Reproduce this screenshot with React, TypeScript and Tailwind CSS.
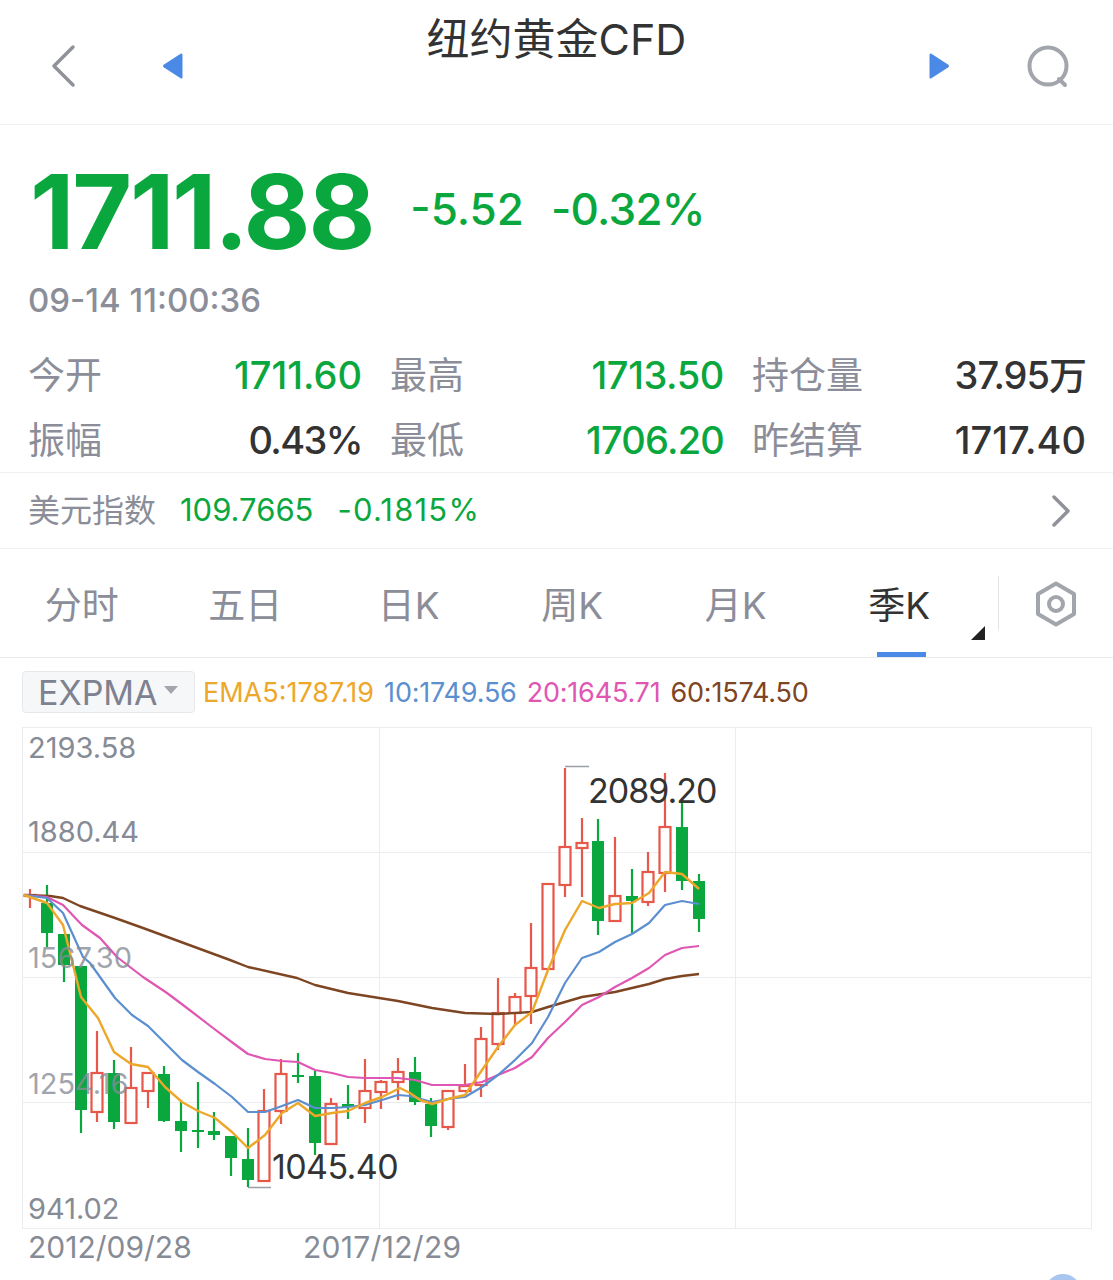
import React from 'react';

const NUM = "font-['Inter','Noto_Sans_CJK_SC',sans-serif]";
const RED = '#e6584a';
const GREEN = '#0aa73e';

// x, wick top, wick bottom, body top, body bottom
const candles: { x: number; hi: number; lo: number; top: number; bot: number; up: boolean }[] = [
  { x: 30, hi: 889, lo: 908, top: 895, bot: 896, up: true },
  { x: 47, hi: 885, lo: 947, top: 903, bot: 933, up: false },
  { x: 64, hi: 934, lo: 982, top: 934, bot: 965, up: false },
  { x: 81, hi: 966, lo: 1133, top: 966, bot: 1110, up: false },
  { x: 97, hi: 1031, lo: 1122, top: 1073, bot: 1112, up: true },
  { x: 114, hi: 1060, lo: 1129, top: 1073, bot: 1122, up: false },
  { x: 131, hi: 1047, lo: 1123, top: 1088, bot: 1123, up: true },
  { x: 148, hi: 1073, lo: 1108, top: 1073, bot: 1091, up: true },
  { x: 164, hi: 1066, lo: 1122, top: 1074, bot: 1121, up: false },
  { x: 181, hi: 1102, lo: 1152, top: 1121, bot: 1131, up: false },
  { x: 198, hi: 1082, lo: 1148, top: 1130, bot: 1132, up: false },
  { x: 214, hi: 1112, lo: 1140, top: 1131, bot: 1135, up: false },
  { x: 231, hi: 1136, lo: 1176, top: 1136, bot: 1158, up: false },
  { x: 248, hi: 1128, lo: 1187, top: 1159, bot: 1180, up: false },
  { x: 264, hi: 1089, lo: 1181, top: 1111, bot: 1181, up: true },
  { x: 281, hi: 1059, lo: 1124, top: 1074, bot: 1111, up: true },
  { x: 298, hi: 1053, lo: 1083, top: 1075, bot: 1077, up: false },
  { x: 315, hi: 1071, lo: 1155, top: 1076, bot: 1143, up: false },
  { x: 331, hi: 1098, lo: 1145, top: 1104, bot: 1144, up: true },
  { x: 348, hi: 1085, lo: 1119, top: 1104, bot: 1107, up: false },
  { x: 365, hi: 1059, lo: 1123, top: 1091, bot: 1108, up: true },
  { x: 381, hi: 1080, lo: 1109, top: 1082, bot: 1092, up: true },
  { x: 398, hi: 1058, lo: 1100, top: 1072, bot: 1082, up: true },
  { x: 415, hi: 1057, lo: 1105, top: 1072, bot: 1102, up: false },
  { x: 431, hi: 1098, lo: 1137, top: 1104, bot: 1126, up: false },
  { x: 448, hi: 1091, lo: 1130, top: 1091, bot: 1127, up: true },
  { x: 465, hi: 1064, lo: 1091, top: 1086, bot: 1091, up: true },
  { x: 481, hi: 1027, lo: 1097, top: 1039, bot: 1085, up: true },
  { x: 498, hi: 978, lo: 1050, top: 1013, bot: 1044, up: true },
  { x: 515, hi: 993, lo: 1025, top: 997, bot: 1013, up: true },
  { x: 531, hi: 923, lo: 1024, top: 968, bot: 996, up: true },
  { x: 548, hi: 884, lo: 969, top: 884, bot: 969, up: true },
  { x: 565, hi: 768, lo: 897, top: 847, bot: 885, up: true },
  { x: 582, hi: 818, lo: 897, top: 843, bot: 848, up: true },
  { x: 598, hi: 819, lo: 935, top: 841, bot: 921, up: false },
  { x: 615, hi: 837, lo: 921, top: 896, bot: 921, up: true },
  { x: 632, hi: 869, lo: 933, top: 896, bot: 901, up: false },
  { x: 648, hi: 852, lo: 906, top: 872, bot: 902, up: true },
  { x: 665, hi: 773, lo: 892, top: 827, bot: 873, up: true },
  { x: 682, hi: 802, lo: 890, top: 827, bot: 881, up: false },
  { x: 699, hi: 874, lo: 932, top: 881, bot: 919, up: false },
];

const ema5 = '24,895 47,903 63,925 81,997 98,1018 114,1052 131,1064 148,1067 165,1087 182,1102 198,1111 215,1118 232,1132 248,1148 265,1135 282,1113 298,1103 315,1116 332,1113 348,1111 365,1103 382,1097 400,1088 410,1093 420,1100 432,1104 448,1099 465,1095 482,1070 498,1047 515,1025 532,1012 548,970 565,930 582,901 599,908 615,904 632,903 649,893 665,872 682,874 699,889';
const ema10 = '24,895 47,898 63,913 83,957 90,963 115,998 132,1015 148,1026 165,1043 182,1060 198,1072 215,1084 232,1097 248,1112 265,1112 282,1106 298,1100 315,1108 332,1108 348,1107 365,1105 382,1100 398,1095 410,1096 432,1102 448,1099 465,1097 482,1087 498,1075 515,1060 532,1043 548,1017 565,983 582,958 599,952 615,942 632,934 649,923 665,905 682,901 699,904';
const ema20 = '24,895 47,897 63,905 82,925 100,938 117,957 143,977 167,993 187,1008 213,1028 233,1043 248,1054 265,1059 282,1061 298,1062 315,1070 332,1073 348,1077 365,1078 398,1078 415,1080 432,1085 465,1085 482,1082 498,1075 515,1068 532,1057 548,1038 565,1022 582,1005 599,997 615,987 632,978 649,968 665,955 682,948 699,946';
const ema60 = '24,895 50,896 63,898 80,906 115,918 143,928 230,960 248,967 297,978 315,985 348,993 398,1001 432,1008 465,1013 498,1014 532,1012 548,1007 582,997 615,992 632,988 649,984 665,979 682,976 699,974';

const Stat = ({ label, value, color }: { label: string; value: string; color: string }) => (
  <div className="flex items-center justify-between h-[65px]">
    <span className="text-[37px] text-[#8b8e99]">{label}</span>
    <span className={`text-[38px] font-medium ${color}`}>{value}</span>
  </div>
);

const tabs = ['分时', '五日', '日K', '周K', '月K', '季K'];

export default function App() {
  return (
    <div className={`${NUM} relative h-[1280px] w-[1113px] overflow-hidden bg-white`}>
      {/* Header */}
      <div className="grid grid-cols-[1fr_auto_1fr] h-[125px] border-b border-[#eeeff1]">
        <div className="flex items-start pl-[50px] pt-[44px] gap-[85px]">
          <svg width="27" height="44" viewBox="0 0 27 44" fill="none">
            <path d="M23 3 L4 22 L23 41" stroke="#8f9299" strokeWidth="3.5" strokeLinecap="round" strokeLinejoin="round" />
          </svg>
          <svg className="mt-[8px]" width="21" height="28" viewBox="0 0 21 28">
            <path d="M19 1.5 Q20.5 1 20.5 3 L20.5 25 Q20.5 27 19 26.5 L2 15.5 Q0 14 2 12.5 Z" fill="#4a8ae6" />
          </svg>
        </div>
        <div className="text-[43px] leading-[50px] pt-[14px] text-[#333333]">纽约黄金CFD</div>
        <div className="flex items-start justify-end pr-[43px] pt-[44px] gap-[76px]">
          <svg className="mt-[8px]" width="21" height="28" viewBox="0 0 21 28">
            <path d="M2 1.5 Q0.5 1 0.5 3 L0.5 25 Q0.5 27 2 26.5 L19 15.5 Q21 14 19 12.5 Z" fill="#4a8ae6" />
          </svg>
          <svg width="44" height="44" viewBox="0 0 44 44" fill="none">
            <circle cx="22" cy="22" r="18.5" stroke="#a3a5ac" strokeWidth="4" />
            <path d="M33 35 L39 41" stroke="#a3a5ac" strokeWidth="4" strokeLinecap="round" />
          </svg>
        </div>
      </div>

      {/* Price */}
      <div className="flex items-center pl-[30px] pt-[32px] h-[141px]">
        <span className="text-[103px] leading-none font-bold tracking-[-2.2px] text-[#0aa73e]">1711.88</span>
        <span className="ml-[37px] mb-[6px] text-[44px] font-medium text-[#0aa73e]">-5.52</span>
        <span className="ml-[27px] mb-[6px] text-[44px] font-medium tracking-[-0.7px] text-[#0aa73e]">-0.32%</span>
      </div>
      <div className="pl-[28px] mt-[9px] h-[50px] text-[33px] leading-[50px] font-medium text-[#8b8e99]">09-14 11:00:36</div>

      {/* Stats */}
      <div className="grid grid-cols-3 gap-x-[28px] pl-[28px] pr-[27px] mt-[18px] h-[129px]">
        <Stat label="今开" value="1711.60" color="text-[#0aa73e]" />
        <Stat label="最高" value="1713.50" color="text-[#0aa73e] tracking-[-0.4px]" />
        <Stat label="持仓量" value="37.95万" color="text-[#333333] tracking-[-1px]" />
        <Stat label="振幅" value="0.43%" color="text-[#333333] tracking-[-1.6px]" />
        <Stat label="最低" value="1706.20" color="text-[#0aa73e] tracking-[-0.8px]" />
        <Stat label="昨结算" value="1717.40" color="text-[#333333]" />
      </div>

      {/* Dollar index */}
      <div className="flex items-center h-[77px] pl-[28px] pr-[42px] border-y border-[#eeeff1]">
        <span className="text-[32px] text-[#8b8e99]">美元指数</span>
        <span className="ml-[24px] text-[31px] text-[#0aa73e]">109.7665</span>
        <span className="ml-[24px] text-[31px] tracking-[1.2px] text-[#0aa73e]">-0.1815%</span>
        <svg className="ml-auto" width="20" height="32" viewBox="0 0 20 32" fill="none">
          <path d="M3 2 L17 16 L3 30" stroke="#8f9299" strokeWidth="3.5" strokeLinecap="round" strokeLinejoin="round" />
        </svg>
      </div>

      {/* Tabs */}
      <div className="relative flex h-[109px] border-b border-[#e9eaec]">
        <div className="flex w-[983px]">
          {tabs.map(t => (
            <div key={t} className="relative flex w-[163.5px] justify-center pt-[34px]">
              <span className={`text-[37px] leading-[46px] ${t === '季K' ? 'text-[#333333]' : 'text-[#8b8e99]'}`}>{t}</span>
              {t === '季K' && <span className="absolute bottom-0 left-[59px] h-[5px] w-[49px] bg-[#4a8ae6]" />}
            </div>
          ))}
        </div>
        <svg className="absolute left-[971px] top-[77px]" width="14" height="14" viewBox="0 0 14 14">
          <path d="M14 0 V14 H0 Z" fill="#222222" />
        </svg>
        <div className="ml-[15px] mt-[27px] h-[54px] w-px bg-[#e4e5e8]" />
        <svg className="ml-[37px] mt-[32px]" width="40" height="46" viewBox="0 0 40 46" fill="none">
          <path d="M20 2.5 L38 13 V33 L20 43.5 L2 33 V13 Z" stroke="#a3a5ac" strokeWidth="4" strokeLinejoin="round" />
          <circle cx="20" cy="23" r="7" stroke="#a3a5ac" strokeWidth="4" />
        </svg>
      </div>

      {/* Indicator legend */}
      <div className="flex items-center h-[69px] pl-[22px] pt-[1px]">
        <div className="flex items-center h-[42px] w-[173px] pl-[15px] mb-[3px] rounded-[4px] border border-[#e6e8ec] bg-[#f6f7f9]">
          <span className="text-[34px] text-[#7e8290] translate-y-[1px]">EXPMA</span>
          <svg className="ml-[6px] mb-[4px]" width="14" height="8" viewBox="0 0 14 8">
            <path d="M0 0 H14 L7 8 Z" fill="#a3a5ac" />
          </svg>
        </div>
        <div className="flex gap-[10px] ml-[8px] text-[27px]">
          <span className="text-[#eda72a]">EMA5:1787.19</span>
          <span className="tracking-[-0.2px] text-[#5b8fd0]">10:1749.56</span>
          <span className="tracking-[-0.2px] text-[#e056b3]">20:1645.71</span>
          <span className="tracking-[-0.2px] text-[#7d4522]">60:1574.50</span>
        </div>
      </div>

      {/* Chart */}
      <div className="relative ml-[22px] h-[502px] w-[1070px]">
        <svg width="1070" height="502" viewBox="22 727 1070 502" fill="none">
          <rect x="22.5" y="727.5" width="1069" height="501" stroke="#ebecef" />
          {[852.5, 977.5, 1102.5].map(y => <path key={y} d={`M22 ${y} H1091`} stroke="#ebecef" />)}
          {[379.5, 735.5].map(x => <path key={x} d={`M${x} 727 V1228`} stroke="#ebecef" />)}
          <path d="M565 766.5 H589" stroke="#9a9da3" strokeWidth="1.5" />
          <path d="M248 1187.5 H271" stroke="#9a9da3" strokeWidth="1.5" />
          {candles.map(c => {
            const col = c.up ? RED : GREEN;
            return (
              <g key={c.x}>
                <path d={`M${c.x} ${c.hi} V${c.lo}`} stroke={col} strokeWidth="2.2" />
                {c.up ? (
                  <rect x={c.x - 5.5} y={c.top} width={11} height={c.bot - c.top} fill={c.bot - c.top > 2 ? '#ffffff' : 'none'} stroke={col} strokeWidth="2.2" />
                ) : (
                  <rect x={c.x - 6} y={c.top} width={12} height={c.bot - c.top} fill={col} />
                )}
              </g>
            );
          })}
          <polyline points={ema60} stroke="#7d4522" strokeWidth="2.4" strokeLinejoin="round" />
          <polyline points={ema20} stroke="#e056b3" strokeWidth="2.2" strokeLinejoin="round" />
          <polyline points={ema10} stroke="#5b8fd0" strokeWidth="2.2" strokeLinejoin="round" />
          <polyline points={ema5} stroke="#eda72a" strokeWidth="2.4" strokeLinejoin="round" />
        </svg>
        <span className="absolute left-[6px] top-[3px] text-[29px] leading-[36px] text-[#868b96]">2193.58</span>
        <span className="absolute left-[6px] top-[87px] text-[29px] leading-[36px] text-[#868b96]">1880.44</span>
        <span className="absolute left-[6px] top-[213px] text-[29px] leading-[36px] text-[#868b96]/80">1567.30</span>
        <span className="absolute left-[6px] top-[339px] text-[29px] leading-[36px] text-[#868b96]/80">1254.16</span>
        <span className="absolute left-[6px] top-[464px] text-[29px] leading-[36px] text-[#868b96]">941.02</span>
        <span className="absolute left-[566px] top-[42px] text-[34px] leading-[44px] tracking-[-1px] text-[#333333]">2089.20</span>
        <span className="absolute left-[250px] top-[418px] text-[34px] leading-[44px] tracking-[-0.6px] text-[#333333]">1045.40</span>
      </div>

      {/* Date axis */}
      <div className="relative h-[40px] text-[30px] leading-[36px] text-[#868b96]">
        <span className="absolute left-[28px] top-0">2012/09/28</span>
        <span className="absolute left-[303px] top-0 tracking-[0.3px]">2017/12/29</span>
      </div>
      <div className="absolute left-[1045px] top-[1274px] h-[36px] w-[36px] rounded-full bg-[#a9c6f0]" />
    </div>
  );
}
